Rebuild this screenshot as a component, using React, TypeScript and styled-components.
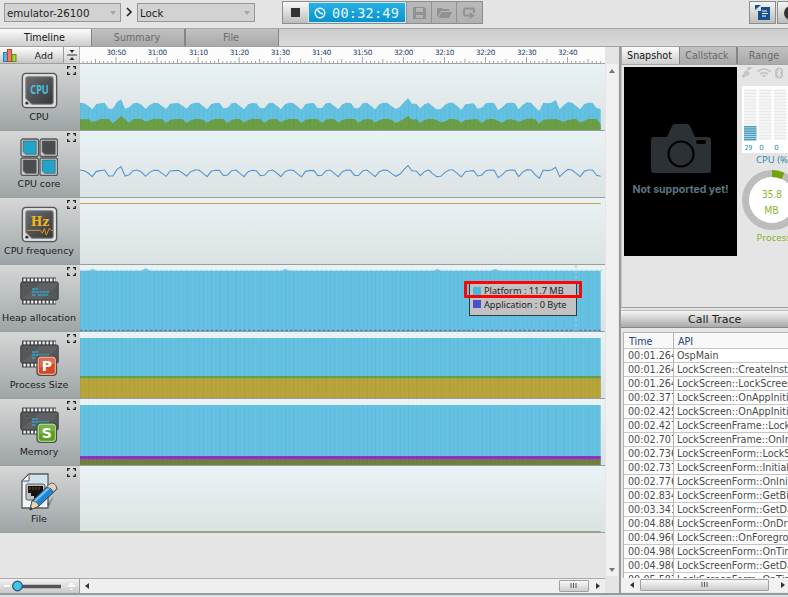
import React from "react";
import styled, { createGlobalStyle } from "styled-components";

const Global = createGlobalStyle`
  * { box-sizing: border-box; }
  body { margin: 0; background: #e4e4e4; overflow: hidden; }
  body, svg text { font-family: "DejaVu Sans", Verdana, sans-serif; }
  svg { display: block; }
`;

const Shell = styled.div`
  width: 788px;
  height: 597px;
  display: flex;
  flex-direction: column;
  overflow: hidden;
  background: #e5e5e5;
  font-size: 9.5px;
  color: #1c1c1c;
  white-space: nowrap;
`;

/* ---------- toolbar ---------- */
const Toolbar = styled.div`
  height: 28px;
  flex: none;
  display: flex;
  align-items: flex-start;
  background: #e4e4e4;
  padding: 1px 0 0 4px;
  overflow: hidden;
`;
const Combo = styled.div<{ $w: number }>`
  width: ${(p) => p.$w}px;
  height: 19px;
  margin-top: 2px;
  border: 1px solid #979797;
  background: #d2d2d2;
  display: flex;
  align-items: center;
  justify-content: space-between;
  padding: 0 4px 0 2px;
  font-size: 10.3px;
  color: #222;
`;
const Chevron = styled.div`
  width: 16px;
  height: 22px;
  display: grid;
  place-items: center;
`;
const ButtonGroup = styled.div`
  display: flex;
  height: 23px;
  margin-left: 27px;
  border: 1px solid #8d8d8d;
`;
const ToolButton = styled.div<{ $off?: boolean; $w?: number }>`
  width: ${(p) => p.$w ?? 25}px;
  height: 21px;
  display: grid;
  place-items: center;
  background: ${(p) => (p.$off ? "linear-gradient(#b9b9b9,#b1b1b1)" : "linear-gradient(#fafafa,#bdbdbd)")};
  border-left: ${(p) => (p.$off ? "1px solid #929292" : "0")};
`;
const Clock = styled.div`
  width: 98px;
  height: 21px;
  border: 1px solid #cfe9f5;
  background: linear-gradient(#28b1e4, #0a92cd);
  display: flex;
  align-items: center;
  padding-left: 5px;
  gap: 6px;
  color: #e6f6fd;
  font: 13.5px "DejaVu Sans Mono", monospace;
  letter-spacing: 0.25px;
`;
const SideButtons = styled.div`
  margin-left: auto;
  width: 39px;
  display: flex;
  gap: 1px;
`;
const SideButton = styled.div`
  width: 27px;
  height: 23px;
  flex: none;
  border: 1px solid #8d8d8d;
  background: linear-gradient(#f4f4f4, #bcbcbc);
  display: grid;
  place-items: center;
`;

/* ---------- tabs ---------- */
const TabStrip = styled.div`
  height: 19px;
  flex: none;
  display: flex;
  border-top: 1px solid #a6a6a6;
  border-bottom: 1px solid #a2a2a2;
  background: linear-gradient(#cbcbcb, #dadada);
`;
const Tab = styled.div<{ $on?: boolean; $w: number }>`
  width: ${(p) => p.$w}px;
  flex: none;
  display: flex;
  align-items: center;
  justify-content: center;
  font-size: 9.6px;
  padding-right: 2px;
  color: ${(p) => (p.$on ? "#141414" : "#6b6b6b")};
  background: ${(p) => (p.$on ? "linear-gradient(#fcfcfc,#cdcdcd)" : "linear-gradient(#c2c2c2,#a9a9a9)")};
  border-right: ${(p) => (p.$on ? "0" : "1px solid #858585")};
  border-left: ${(p) => (p.$on ? "0" : "1px solid #858585")};
`;

/* ---------- body ---------- */
const Body = styled.div`
  flex: 1;
  display: flex;
  min-height: 0;
`;
const Left = styled.div`
  width: 619px;
  flex: none;
  display: flex;
  flex-direction: column;
`;
const Upper = styled.div`
  display: flex;
  height: 531px;
`;
const Timeline = styled.div`
  width: 605px;
  flex: none;
  display: flex;
  flex-direction: column;
`;
const RulerRow = styled.div`
  height: 17px;
  flex: none;
  display: flex;
  background: #fcfcfc;
  border-bottom: 1px solid #a0a0a0;
`;
const AddButton = styled.div`
  width: 64px;
  display: flex;
  align-items: center;
  justify-content: space-between;
  padding: 0 10px 0 3px;
  background: linear-gradient(#ffffff, #c6c6c6);
  border-right: 1px solid #9c9c9c;
`;
const SplitButton = styled.div`
  width: 16px;
  display: grid;
  place-items: center;
  background: linear-gradient(#fafafa, #d0d0d0);
  border-right: 1px solid #b4b4b4;
`;
const Row = styled.div`
  position: relative;
  height: 67px;
  flex: none;
  display: flex;
  border-bottom: 1px solid #9d9d9d;
`;
const Label = styled.div`
  width: 80px;
  height: 66px;
  flex: none;
  display: grid;
  grid-template-rows: 38px 14px;
  justify-items: center;
  align-items: center;
  padding: 7px 2px 0 0;
  background: linear-gradient(#d6d7d7, #9ea5a7);
  position: relative;
`;
const Expand = styled.div`
  position: absolute;
  right: 4px;
  top: 2px;
`;
const Plot = styled.div`
  width: 525px;
  height: 66px;
  background: linear-gradient(#e9f2f4, #dbe2e4);
  overflow: hidden;
`;
const Tooltip = styled.div`
  position: absolute;
  left: 469px;
  top: 18px;
  width: 108px;
  height: 33px;
  border: 1px solid #2e3b44;
  background: #c2c2c2;
  padding: 0 0 0 3px;
  display: grid;
  grid-template-rows: 13px 14px;
  align-items: center;
  font: 9.2px "Noto Sans", sans-serif;
  color: #222;
`;
const Legend = styled.div<{ $c: string }>`
  display: flex;
  align-items: center;
  gap: 3px;
  height: 12px;
  &::before {
    content: "";
    width: 8px;
    height: 8px;
    background: ${(p) => p.$c};
  }
`;
const RedBox = styled.div`
  position: absolute;
  left: 464px;
  top: 16px;
  width: 118px;
  height: 17px;
  border: 3px solid #fb0505;
  border-radius: 1px;
`;
const VScroll = styled.div`
  width: 12px;
  margin: 17px 0 2px 1px;
  background: #f1f1f1;
  display: flex;
  flex-direction: column;
  justify-content: space-between;
  align-items: center;
  padding: 4px 0 3px;
`;
const Footer = styled.div`
  height: 15px;
  display: flex;
  border-top: 1px solid #ababab;
  background: #efefef;
  width: 605px;
`;
const Zoomer = styled.div`
  width: 80px;
  background: linear-gradient(#f2f2f2, #c9c9c9);
  border-right: 1px solid #9c9c9c;
`;
const HScroll = styled.div`
  flex: 1;
  display: flex;
  align-items: center;
  padding: 0 4px 0 4px;
`;
const Thumb = styled.div<{ $w: number }>`
  width: ${(p) => p.$w}px;
  height: 12px;
  flex: none;
  border: 1px solid #a0a0a0;
  border-radius: 1px;
  background: linear-gradient(#f8f8f8, #cdcdcd);
  display: grid;
  place-items: center;
`;
const Spacer = styled.div`
  flex: 1;
`;

/* ---------- right ---------- */
const Right = styled.div`
  flex: 1;
  min-width: 0;
  overflow: hidden;
  border-left: 2px solid #999;
  display: flex;
  flex-direction: column;
`;
const RightTabs = styled.div`
  height: 18px;
  flex: none;
  display: flex;
  padding-left: 1px;
  border-bottom: 1px solid #a4a4a4;
  background: #aaa;
`;
const Snapshot = styled.div`
  height: 243px;
  flex: none;
  display: flex;
  padding: 2px 0 0 3px;
  border-bottom: 1px solid #a0a0a0;
  border-left: 1px solid #c8c8c8;
`;
const Screen = styled.div`
  width: 113px;
  height: 189px;
  margin-left: -1px;
  flex: none;
  background: #000;
  display: flex;
  flex-direction: column;
  align-items: center;
  color: #5d7480;
  font: bold 10.5px Inter, Roboto, sans-serif;
  padding-top: 56px;
  gap: 9px;
`;
const Gauges = styled.div`
  width: 50px;
  margin-left: 4px;
`;
const TraceHead = styled.div`
  height: 18px;
  margin-top: 2px;
  flex: none;
  border-top: 1px solid #bbb;
  border-bottom: 1px solid #888;
  background: linear-gradient(#f6f6f6, #a9a9a9);
  display: flex;
  align-items: center;
  padding-left: 67px;
  font-size: 11px;
`;
const Trace = styled.div`
  margin: 4px 0 0 2px;
  height: 246px;
  flex: none;
  border-left: 1px solid #b5b5b5;
  border-top: 1px solid #b5b5b5;
  background: #fff;
  overflow: hidden;
`;
const TraceRow = styled.div<{ $head?: boolean }>`
  height: ${(p) => (p.$head ? 16 : 14)}px;
  display: grid;
  grid-template-columns: 50px 1fr;
  border-bottom: 1px solid #c6c6c6;
  color: ${(p) => (p.$head ? "#26427e" : "#4a4a4a")};
  background: ${(p) => (p.$head ? "#f8f8f8" : "#fff")};
  font-size: 9.6px;
  line-height: ${(p) => (p.$head ? 17 : 13)}px;
`;
const Cell = styled.div<{ $pad: number; $line?: boolean }>`
  overflow: hidden;
  padding-left: ${(p) => p.$pad}px;
  border-right: ${(p) => (p.$line ? "1px solid #b4b4b4" : "0")};
`;
const TraceScroll = styled.div`
  height: 14px;
  flex: none;
  display: flex;
  align-items: center;
  padding: 0 2px 0 8px;
  gap: 5px;
  background: #f1f1f1;
`;
const BottomEdge = styled.div`
  height: 4px;
  flex: none;
  border-top: 2px solid #999;
  background: #d5e2e8;
`;

/* ---------- drawings ---------- */
const Arrow = ({ d, c = "#333" }: { d: "l" | "r" | "u" | "d"; c?: string }) => {
  const paths = { l: "M5 0v6L1 3z", r: "M1 0v6l4-3z", u: "M0 5h6L3 1z", d: "M0 1h6L3 5z" };
  return (
    <svg width="6" height="6"><path d={paths[d]} fill={c} /></svg>
  );
};

const Grip = () => (
  <svg width="8" height="6"><path d="M1 0v5M3.5 0v5M6 0v5" stroke="#555" /></svg>
);

const ExpandIcon = () => (
  <svg width="9" height="9" fill="none" stroke="#222" strokeWidth="1.3">
    <path d="M.7 3V.7H3M6 .7h2.3V3M8.3 6v2.3H6M3 8.3H.7V6" />
  </svg>
);

const ChipFrame = ({ children }: { children: React.ReactNode }) => (
  <svg width="37" height="37" viewBox="0 0 38 38">
    <defs>
      <linearGradient id="core" x1="0" y1="0" x2="1" y2="1">
        <stop offset="0" stopColor="#6a6c6e" />
        <stop offset="1" stopColor="#343638" />
      </linearGradient>
    </defs>
    <rect x="1.5" y="1.5" width="35" height="35" rx="3.5" fill="#d0d1d2" stroke="#55585a" strokeWidth="1.6" />
    <rect x="3" y="3" width="32" height="32" rx="2" fill="none" stroke="#f5f5f5" />
    <path d="M7 5h24q2 0 2 2v24q0 2-2 2H11l-6-6V7q0-2 2-2z" fill="url(#core)" stroke="#77797b" />
    <circle cx="6" cy="32" r="1.5" fill="#333" />
    {children}
  </svg>
);

const CpuIcon = () => (
  <ChipFrame>
    <text x="19" y="23" textAnchor="middle" fontSize="12.5" fontWeight="bold" fill="#46c0e6" style={{ fontFamily: '"Noto Sans", sans-serif' }} textLength="19" lengthAdjust="spacingAndGlyphs">CPU</text>
  </ChipFrame>
);

const HzIcon = () => (
  <ChipFrame>
    <text x="19.5" y="20.5" textAnchor="middle" fontSize="14" fontWeight="bold" fill="#f5b516" style={{ fontFamily: '"DejaVu Serif", serif' }} textLength="19" lengthAdjust="spacingAndGlyphs">Hz</text>
    <path d="M6 25h14l2 3 2-5 2 7 3-7 2 2h2" fill="none" stroke="#d69b12" strokeWidth="1" />
  </ChipFrame>
);

const CoreIcon = () => (
  <svg width="38" height="38" viewBox="0 0 38 38">
    {[[1, 1, "#22a3c9"], [20, 1, "#4a4c4e"], [1, 20, "#4a4c4e"], [20, 20, "#22a3c9"]].map(([x, y, f], i) => (
      <g key={i}>
        <rect x={x} y={y} width="17.5" height="17.5" rx="2" fill="#c9cacb" stroke="#55585a" strokeWidth="1.3" />
        <path d={`M${+x + 2.2} ${+y + 2}h13v13.3h-10.500l-2.500-2.500z`} fill={f as string} stroke="#4d5052" strokeWidth=".6" />
      </g>
    ))}
  </svg>
);

const MemoryIcon = ({ badge, color }: { badge?: string; color?: string }) => (
  <svg width="40" height="38" viewBox="0 0 40 38">
    <g transform={badge ? "translate(1 1)" : "translate(1 5)"}>
      <path d="M2 3.2h34M2 24.8h34" stroke="#4a4c4e" strokeWidth="5.4" />
      <path d="M3.5 3.2h32M3.5 24.8h32" stroke="#f4f4f4" strokeWidth="3.2" strokeDasharray="2.2 1.6" />
      <rect x=".8" y="5" width="37.4" height="18" rx="1.5" fill="#55585a" stroke="#3a3c3e" />
      <path d="M2 22L20 6h17v3L22 22z" fill="#66696b" opacity=".5" />
      <circle cx="7" cy="9" r="1.8" fill="#444" stroke="#777" strokeWidth=".6" />
      <path d="M12 12h6M12 15h17M12 18h4M18 18h11" stroke="#30a5c9" strokeWidth="1.4" strokeDasharray="3 .6" />
    </g>
    {badge && (
      <g>
        <rect x="18" y="17" width="19.5" height="19.5" rx="3.5" fill={color} stroke="#4c4c4c" strokeWidth="1.2" />
        <rect x="19.3" y="18.3" width="17" height="17" rx="2.5" fill="none" stroke="#fff" strokeOpacity=".65" />
        <path d="M20.500 19h15v6q-8 0-15 4z" fill="#fff" opacity=".2" />
        <text x="27.8" y="32" textAnchor="middle" fontSize="14" fontWeight="bold" fill="#fff">{badge}</text>
      </g>
    )}
  </svg>
);

const FileIcon = () => (
  <svg width="40" height="40" viewBox="0 0 40 40">
    <path d="M10 2h19v34H3V9z" fill="#f1f6fa" stroke="#55595c" strokeWidth="1.3" />
    <path d="M12 3h16v8H5z" fill="#cfe2ee" />
    <path d="M3 9h7V2z" fill="#fff" stroke="#55595c" />
    <rect x="7" y="12" width="19" height="16" rx="1.5" fill="#bfc2c4" stroke="#555" />
    <path d="M9 14h15v7h-3v3h-3v2h-3v-2h-3v-3H9z" fill="#17130f" />
    <path d="M11 15v3M14 15v3M17 15v3M20 15v3" stroke="#71511e" />
    <path d="M30 35l5-11-7 8z" fill="#000" opacity=".25" />
    <path d="M11 38l2-9L31 12q4-2 7 5L20 34z" fill="#1f87d8" stroke="#333" strokeWidth=".9" />
    <path d="M15 30l17-16" stroke="#77c4f5" strokeWidth="2" />
    <path d="M11 38l2-9q5 0 7 5z" fill="#f0d4b2" stroke="#444" strokeWidth=".7" />
    <path d="M11 38l.8-3 2 1.5z" fill="#222" />
    <path d="M27 15.5l4-4q5-2 7 5l-4 4q-1-5-7-5z" fill="#dfd1c0" stroke="#444" strokeWidth=".8" />
  </svg>
);

const BarsIcon = () => (
  <svg width="14" height="13">
    <rect x=".5" y="3.5" width="4" height="9" fill="#53b6ea" stroke="#237fb4" />
    <rect x="4.5" y=".5" width="4" height="12" fill="#f47b60" stroke="#c33e29" />
    <rect x="9" y="5.5" width="4" height="7" fill="#a5d23f" stroke="#5d901d" />
  </svg>
);

/* ---------- charts: units are thirds of a pixel ---------- */
const STEP = 12.3;
const LOAD = [
  173, 175, 182, 193, 177, 175, 173, 191, 191, 172, 163, 191, 187, 175, 173, 179, 192, 180, 174, 174, 183, 192, 176, 175, 174, 182, 191, 178, 173, 173,
  183, 193, 177, 174, 174, 190, 188, 175, 173, 183, 193, 178, 174, 175, 190, 189, 175, 173, 182, 193, 178, 173, 174, 184, 194, 177, 175, 174, 190, 189,
  175, 173, 183, 193, 178, 173, 174, 190, 189, 175, 173, 183, 193, 178, 173, 174, 184, 192, 186, 172, 160, 176, 176, 190, 178, 173, 184, 193, 192,
  180, 173, 173, 183, 194, 178, 176, 175, 191, 188, 175, 173, 174, 196, 187, 175, 173, 174, 193, 179, 172, 173, 187, 198, 173, 175, 173, 165, 193, 181,
  171, 173, 183, 193, 177, 173, 173, 189,
];
const USER = [
  223, 223, 222, 231, 227, 222, 222, 222, 235, 224, 213, 223, 234, 222, 222, 222, 230, 226, 221, 222, 222, 234, 224, 223, 222, 222, 234, 226, 222, 222,
  224, 233, 225, 222, 222, 222, 235, 224, 222, 222, 233, 225, 222, 222, 222, 234, 224, 222, 222, 232, 226, 222, 222, 222, 235, 224, 222, 222, 223, 233,
  224, 222, 222, 233, 225, 222, 222, 222, 234, 224, 222, 223, 233, 225, 222, 222, 224, 234, 228, 222, 213, 224, 222, 234, 225, 222, 222, 225, 232,
  230, 222, 222, 224, 233, 225, 224, 223, 222, 235, 224, 222, 222, 228, 233, 224, 223, 225, 231, 226, 221, 221, 222, 236, 224, 223, 223, 222, 226, 231,
  225, 223, 222, 233, 227, 222, 222, 222,
];
const END = 1562;
const line = (data: number[], shift: number, last: number) =>
  data.slice(0, 127).map((v, i) => `${i ? "L" : "M"}${(i * STEP).toFixed(1)} ${v + shift}`).join("") + `L${END} ${last + shift}`;
const area = (data: number[], shift: number, last: number) => `${line(data, shift, last)}V198H0Z`;

const Chart = ({ children }: { children: React.ReactNode }) => (
  <Plot>
    <svg width="525" height="66" viewBox="0 0 1575 198">
      <defs>
        <pattern id="stripes" width="24.6" height="10" patternUnits="userSpaceOnUse">
          <rect x="0" width="3" height="10" fill="#235" opacity=".07" />
          <rect x="12" width="3" height="10" fill="#235" opacity=".05" />
        </pattern>
      </defs>
      {children}
    </svg>
  </Plot>
);

const Band = ({ y, h, c }: { y: number; h: number; c: string }) => <rect y={y} width={END} height={h} fill={c} />;

const Ruler = () => (
  <svg width="525" height="16">
    {Array.from({ length: 127 }, (_, i) => {
      const x = 36 + (i - 8) * 4.105;
      const major = (i - 8) % 10 === 0;
      const mid = (i - 8) % 5 === 0;
      return <path key={i} d={`M${x} 16v${major ? -6 : mid ? -4 : -2}`} stroke="#8e8e8e" strokeWidth=".8" />;
    })}
    {["30:50", "31:00", "31:10", "31:20", "31:30", "31:40", "31:50", "32:00", "32:10", "32:20", "32:30", "32:40"].map((t, i) => (
      <text key={t} x={36.3 + i * 41.05} y="7.6" textAnchor="middle" fontSize="7.3" fill="#24406c" textLength="19.5">{t}</text>
    ))}
  </svg>
);

const ITEMS: { name: string; icon: React.ReactNode; chart: React.ReactNode }[] = [
  {
    name: "CPU",
    icon: <CpuIcon />,
    chart: (
      <>
        <path d={area(LOAD, -57, 192)} fill="#63c1e2" />
        <path d={area(USER, -57, 238)} fill="#6b9f45" />
        <path d={area(LOAD, -57, 192)} fill="url(#stripes)" />
      </>
    ),
  },
  { name: "CPU core", icon: <CoreIcon />, chart: <path d={line(LOAD, -56, 192)} fill="none" stroke="#5795d1" strokeWidth="3.3" /> },
  { name: "CPU frequency", icon: <HzIcon />, chart: <path d="M0 16.500H1562" stroke="#d4a04b" strokeWidth="3" /> },
  {
    name: "Heap allocation",
    icon: <MemoryIcon />,
    chart: (
      <>
        <path d={`M0 17H25l12-5 12 5H185l12-7 14 7H605l12-5 12 5H1060l12-5 12 5H1232l14-5 14 5H${END}V198H0Z`} fill="#65c2e2" />
        <rect y="17" width={END} height="181" fill="url(#stripes)" />
        <path d="M0 16H1575" stroke="#a4cddd" strokeWidth="2" strokeDasharray="9 6" />
        <path d={`M0 196H${END}`} stroke="#4a6cc8" strokeWidth="3" strokeDasharray="8 6" />
        <path d="M1488 0V198" stroke="#b5c9d0" strokeWidth="3" strokeDasharray="9 7" />
      </>
    ),
  },
  {
    name: "Process Size",
    icon: <MemoryIcon badge="P" color="#d14a28" />,
    chart: (
      <>
        <Band y={18} h={180} c="#65c2e2" />
        <Band y={132} h={8} c="#679f4a" />
        <Band y={139} h={59} c="#b8a53a" />
        <Band y={18} h={180} c="url(#stripes)" />
      </>
    ),
  },
  {
    name: "Memory",
    icon: <MemoryIcon badge="S" color="#579d1f" />,
    chart: (
      <>
        <Band y={18} h={180} c="#65c2e2" />
        <Band y={171} h={11} c="#8f2fc4" />
        <Band y={181} h={17} c="#71803c" />
        <Band y={18} h={180} c="url(#stripes)" />
      </>
    ),
  },
  { name: "File", icon: <FileIcon />, chart: <path d="M0 196.500H1562" stroke="#87ad72" strokeWidth="3" /> },
];

const CALLS = [
  ["00:01.264", "OspMain"],
  ["00:01.264", "LockScreen::CreateInstance"],
  ["00:01.264", "LockScreen::LockScreen"],
  ["00:02.377", "LockScreen::OnAppInitializing"],
  ["00:02.425", "LockScreen::OnAppInitialized"],
  ["00:02.427", "LockScreenFrame::LockScreen"],
  ["00:02.707", "LockScreenFrame::OnInitializing"],
  ["00:02.736", "LockScreenForm::LockScreen"],
  ["00:02.737", "LockScreenForm::Initialize"],
  ["00:02.776", "LockScreenForm::OnInitializing"],
  ["00:02.834", "LockScreenForm::GetBitmap"],
  ["00:03.341", "LockScreenForm::GetDateTime"],
  ["00:04.886", "LockScreenForm::OnDraw"],
  ["00:04.960", "LockScreen::OnForeground"],
  ["00:04.980", "LockScreenForm::OnTimer"],
  ["00:04.980", "LockScreenForm::GetDateTime"],
  ["00:05.587", "LockScreenForm::OnTimer"],
];

const GaugesDrawing = () => (
  <svg width="50" height="190">
    <g stroke="#c3c3c3" fill="none" strokeWidth="1.4">
      <path d="M1.500 10l3-2.500M6.500 2.500L10 0" strokeWidth="3" />
      <path d="M3.500 6l4 3M5 3.500l3.500 2.500-2 2.500L3.500 6z" fill="#c3c3c3" strokeWidth="1" />
      <path d="M16.500 4.500q6.500-5 13 0M19 7.200q4-3 8 0M21.500 9.500q1.500-1.500 3 0" strokeWidth="1.700" />
      <rect x="34" y=".5" width="8" height="11" rx="4" fill="#c3c3c3" stroke="none" />
      <path d="M36 4l4 4-2 2V2l2 2-4 4" stroke="#eee" strokeWidth=".9" />
    </g>
    <rect x="1" y="19" width="49" height="67" fill="#fff" />
    {[3, 18, 33].map((x) => (
      <g key={x}>
        {Array.from({ length: 17 }, (_, i) => (
          <rect key={i} x={x} y={22.500 + i * 3} width="12.500" height="2" fill="#e9e9e9" />
        ))}
      </g>
    ))}
    {Array.from({ length: 7 }, (_, i) => (
      <rect key={i} x="3" y={59 + i * 2.150} width="12.500" height="1.600" fill="#4a9fc0" />
    ))}
    <g fontSize="7" fill="#2d87ad" textAnchor="middle">
      <text x="7.500" y="83" textLength="7.500" lengthAdjust="spacingAndGlyphs">29</text>
      <text x="20.500" y="83">0</text>
      <text x="35.500" y="83">0</text>
    </g>
    <text x="15" y="95.500" fontSize="9.500" fill="#2d87ad" style={{ fontFamily: '"Noto Sans"' }}>CPU (%)</text>
    <circle cx="31" cy="133" r="26.500" fill="#fff" stroke="#bdbdbd" strokeWidth="7" />
    <path d="M31 106.500a26.500 26.500 0 0 1 11 2.400" fill="none" stroke="#74a208" strokeWidth="7" />
    <g fill="#8bb32d" textAnchor="middle" style={{ fontFamily: '"Noto Sans"' }}>
      <text x="31" y="131" fontSize="10" textLength="20" lengthAdjust="spacingAndGlyphs">35.8</text>
      <text x="30.500" y="147" fontSize="10" textLength="14.500" lengthAdjust="spacingAndGlyphs">MB</text>
    </g>
    <text x="15.500" y="173.500" fontSize="9.500" fill="#8bb32d" style={{ fontFamily: '"Noto Sans"' }}>Process</text>
  </svg>
);

const CameraIcon = () => (
  <svg width="60" height="51">
    <path d="M3 14h13l5-11q1-2 3-2h12q2 0 3 2l5 11h13q3 0 3 3v30q0 3-3 3H3q-3 0-3-3V17q0-3 3-3z" fill="#2b3134" />
    <circle cx="30" cy="31" r="12.500" fill="none" stroke="#000" strokeWidth="2.200" />
    <rect x="45" y="17" width="10" height="4" rx="2" fill="#000" />
  </svg>
);

export default function App() {
  return (
    <Shell>
      <Global />
      <Toolbar>
        <Combo $w={117}>emulator-26100<Arrow d="d" c="#a5a5a5" /></Combo>
        <Chevron>
          <svg width="8" height="10"><path d="M2 1l4 4-4 4" fill="none" stroke="#222" strokeWidth="1.6" /></svg>
        </Chevron>
        <Combo $w={118}>Lock<Arrow d="d" c="#a5a5a5" /></Combo>
        <ButtonGroup>
          <ToolButton><svg width="9" height="9"><rect width="9" height="9" fill="#333" /></svg></ToolButton>
          <Clock>
            <svg width="12" height="12" fill="none" stroke="#e6f6fd" strokeWidth="1.4">
              <circle cx="6" cy="6" r="4.800" /><path d="M3.500 3L6 6l3 1" />
            </svg>
            00:32:49
          </Clock>
          <ToolButton $off>
            <svg width="13" height="12"><path d="M0 0h11l2 2v10H0zM3 1v4h7V1zM3 8v3h7V8z" fill="#929292" fillRule="evenodd" /></svg>
          </ToolButton>
          <ToolButton $off>
            <svg width="15" height="12"><path d="M0 1h5l1 1h6v2H4L1 10 0 9zM4.500 5H15l-3 6H1.500z" fill="#929292" /></svg>
          </ToolButton>
          <ToolButton $off $w={26}>
            <svg width="13" height="12"><path d="M6 8.500H2.500Q1 8.500 1 7V3q0-1.500 1.500-1.500h7Q11 1.500 11 3v3" fill="none" stroke="#929292" strokeWidth="2" /><path d="M6.500 5l5.500 3.500L6.500 12z" fill="#929292" /></svg>
          </ToolButton>
        </ButtonGroup>
        <SideButtons>
          <SideButton>
            <svg width="16" height="16"><path d="M0 0h6L0 5z" fill="#17508f" /><path d="M6 2h9v13H3V6h3z" fill="#17508f" /><path d="M7 6h5M7 8.500h6M7 11h4" stroke="#fff" /></svg>
          </SideButton>
          <SideButton><svg width="16" height="16"><circle cx="8" cy="8" r="7" fill="#333" /></svg></SideButton>
        </SideButtons>
      </Toolbar>
      <TabStrip>
        <Tab $on $w={91}>Timeline</Tab>
        <Tab $w={94}>Summary</Tab>
        <Tab $w={94}>File</Tab>
      </TabStrip>
      <Body>
        <Left>
          <Upper>
            <Timeline>
              <RulerRow>
                <AddButton><BarsIcon />Add</AddButton>
                <SplitButton>
                  <svg width="10" height="12"><path d="M0 6h10" stroke="#333" /><path d="M2.500 1h5L5 4zM2.500 11h5L5 8z" fill="#333" /></svg>
                </SplitButton>
                <Ruler />
              </RulerRow>
              {ITEMS.map((it) => (
                <Row key={it.name}>
                  <Label>
                    {it.icon}
                    <span>{it.name}</span>
                    <Expand><ExpandIcon /></Expand>
                  </Label>
                  <Chart>{it.chart}</Chart>
                  {it.name === "Heap allocation" && (
                    <>
                      <Tooltip>
                        <Legend $c="#49b8df">Platform : 11.7 MB</Legend>
                        <Legend $c="#4a51cf">Application : 0 Byte</Legend>
                      </Tooltip>
                      <RedBox />
                    </>
                  )}
                </Row>
              ))}
            </Timeline>
            <VScroll><Arrow d="u" c="#777" /><Arrow d="d" c="#777" /></VScroll>
          </Upper>
          <Footer>
            <Zoomer>
              <svg width="79" height="14">
                <path d="M4 7.500h6M68 7.500h7M71.500 4v7" stroke="#fff" strokeWidth="2.400" />
                <path d="M4 8.800h6M68 8.800h7" stroke="#999" strokeWidth=".6" />
                <path d="M16 7.500h45" stroke="#555" strokeWidth="3.600" />
                <circle cx="17.500" cy="7" r="4.800" fill="#3fc4ee" stroke="#24546a" strokeWidth="1.200" />
              </svg>
            </Zoomer>
            <HScroll><Arrow d="l" /><Spacer /><Thumb $w={30}><Grip /></Thumb><svg width="6" height="6" /><Arrow d="r" /></HScroll>
          </Footer>
        </Left>
        <Right>
          <RightTabs>
            <Tab $on $w={57}>Snapshot</Tab>
            <Tab $w={58}>Callstack</Tab>
            <Tab $w={56}>Range</Tab>
          </RightTabs>
          <Snapshot>
            <Screen><CameraIcon />Not supported yet!</Screen>
            <Gauges><GaugesDrawing /></Gauges>
          </Snapshot>
          <TraceHead>Call Trace</TraceHead>
          <Trace>
            <TraceRow $head><Cell $pad={5} $line>Time</Cell><Cell $pad={4}>API</Cell></TraceRow>
            {CALLS.map(([t, api], i) => (
              <TraceRow key={i}><Cell $pad={4} $line>{t}</Cell><Cell $pad={3}>{api}</Cell></TraceRow>
            ))}
          </Trace>
          <TraceScroll><Arrow d="l" /><Thumb $w={129}><Grip /></Thumb><Spacer /><Arrow d="r" /></TraceScroll>
        </Right>
      </Body>
      <BottomEdge />
    </Shell>
  );
}
